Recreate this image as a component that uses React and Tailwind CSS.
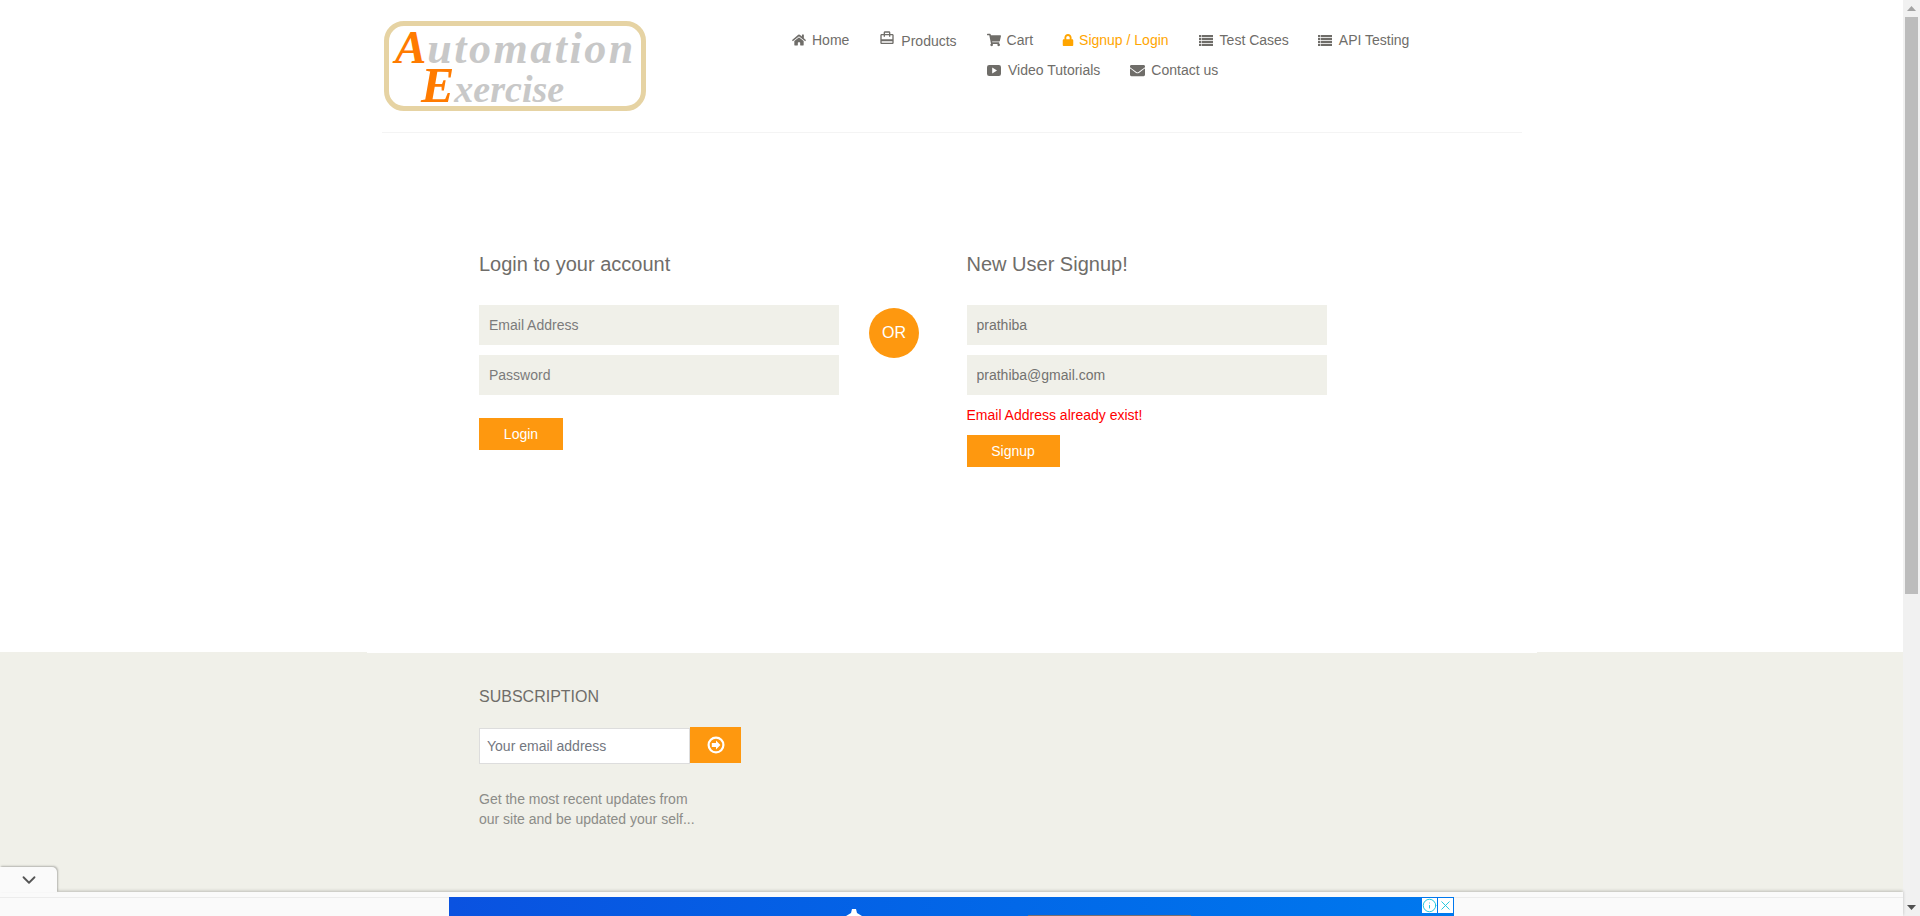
import React from "react";
import { FaHome, FaShoppingCart, FaLock, FaEnvelope } from "react-icons/fa";
import { MdCardTravel } from "react-icons/md";
import { ChevronDown, Info, X } from "lucide-react";

function Logo() {
  return (
    <div className="ml-[2.5px] mt-[21px] w-[262px] h-[90px] border-[5px] border-[#e6d3a3] rounded-[20px] bg-white pt-[2px] font-['Liberation_Serif',serif] italic font-bold whitespace-nowrap">
      <div className="h-[38px] flex items-baseline pl-[6px]">
        <span className="text-[47px] leading-[38px] text-[#ff7b00]">A</span>
        <span className="text-[44px] leading-[38px] text-[#c8c8c8] tracking-[2.5px] ml-[1px]">utomation</span>
      </div>
      <div className="h-[38px] flex items-baseline pl-[32px]">
        <span className="text-[50px] leading-[38px] text-[#ff7b00]">E</span>
        <span className="text-[38px] leading-[38px] text-[#c8c8c8]">xercise</span>
      </div>
    </div>
  );
}

function ListIcon() {
  return (
    <svg width="14" height="11" viewBox="0 0 14 11" className="shrink-0" fill="currentColor">
      <rect x="0" y="0" width="2.4" height="2.2" />
      <rect x="3" y="0" width="11" height="2.2" />
      <rect x="0" y="3" width="2.4" height="2.2" />
      <rect x="3" y="3" width="11" height="2.2" />
      <rect x="0" y="6" width="2.4" height="2.2" />
      <rect x="3" y="6" width="11" height="2.2" />
      <rect x="0" y="9" width="2.4" height="2" />
      <rect x="3" y="9" width="11" height="2" />
    </svg>
  );
}

function PlayIcon() {
  return (
    <svg width="14" height="11" viewBox="0 0 14 11" className="shrink-0">
      <rect width="14" height="11" rx="2.2" fill="currentColor" />
      <path d="M5.2 2.6L10 5.5L5.2 8.4z" fill="#ffffff" />
    </svg>
  );
}

function CircleArrow() {
  return (
    <svg width="18" height="18" viewBox="0 0 18 18">
      <circle cx="9" cy="9" r="7.4" fill="none" stroke="#ffffff" strokeWidth="2.2" />
      <path d="M9 4.6L13.4 9L9 13.4V11H4.8V7H9z" fill="#ffffff" />
    </svg>
  );
}

function NavItem({ icon, label, gap, textClass = "", color = "text-[#6f6d69]", ml = "" }) {
  return (
    <a className={`flex items-center h-[30px] text-[14px] ${color} ${ml}`} style={{ gap }}>
      {icon}
      <span className={textClass}>{label}</span>
    </a>
  );
}

function Field({ placeholder, value }) {
  return (
    <input
      readOnly
      placeholder={placeholder}
      defaultValue={value}
      className="block w-[360px] h-[40px] bg-[#f0f0e9] pl-[10px] text-[14px] text-[#737270] placeholder:text-[#7b7b7b] outline-none"
    />
  );
}

function Scrollbar() {
  return (
    <aside className="w-[17px] shrink-0 bg-[#f1f1f1] flex flex-col">
      <div className="h-[17px] flex items-center justify-center">
        <svg width="9" height="5" viewBox="0 0 9 5"><path d="M4.5 0L9 5H0z" fill="#a3a3a3" /></svg>
      </div>
      <div className="h-[577px] mx-[2px] bg-[#bcbcbc]" />
      <div className="flex-1" />
      <div className="h-[17px] flex items-center justify-center">
        <svg width="9" height="5" viewBox="0 0 9 5"><path d="M0 0H9L4.5 5z" fill="#505050" /></svg>
      </div>
    </aside>
  );
}

function AdBar() {
  return (
    <div className="absolute left-0 bottom-0 w-[1903px] h-[24px] bg-[#fafafa] shadow-[0_-1px_3px_rgba(0,0,0,0.22)]">
      <div className="absolute left-0 bottom-[24px] w-[57px] h-[25px] bg-[#fafafa] rounded-tr-[5px] shadow-[1px_-1px_2px_rgba(0,0,0,0.25)] flex items-center justify-center text-[#555]">
        <ChevronDown size={22} strokeWidth={2} />
      </div>
      <div className="mt-[5px] h-[19px] border-t border-[#ececec]">
        <div className="relative ml-[449px] -mt-px w-[1005px] h-[19px] bg-linear-to-r from-[#0a52e0] to-[#0078ee] overflow-hidden">
          <svg className="absolute inset-0" width="1005" height="19" viewBox="0 0 1005 19">
            <path d="M397 19L402 16L403 12H407L408 16L413 19z" fill="#ffffff" />
            <rect x="579" y="18" width="163" height="1" fill="#7a6f70" />
          </svg>
          <div className="absolute left-[973px] top-[1px] w-[15px] h-[15px] bg-white flex items-center justify-center text-[#19c5dc]">
            <Info size={15} strokeWidth={1.5} />
          </div>
          <div className="absolute left-[989px] top-[1px] w-[15px] h-[15px] bg-white flex items-center justify-center text-[#19c5dc]">
            <X size={15} strokeWidth={1.5} />
          </div>
        </div>
      </div>
    </div>
  );
}

export default function App() {
  return (
    <div className="relative flex w-full h-[916px] overflow-hidden bg-white font-['Liberation_Sans',Arial,sans-serif]">
      <div className="flex-1 min-w-0 flex flex-col">
        <header className="w-[1170px] mx-auto px-[15px] shrink-0">
          <div className="h-[133px] flex border-b border-[#f4f4f4]">
            <div className="w-[410.5px] shrink-0">
              <Logo />
            </div>
            <nav className="pt-[25px] flex flex-col">
              <div className="flex gap-x-[29px]">
                <NavItem gap={6} label="Home" icon={<FaHome size={14} className="shrink-0" />} />
                <NavItem gap={6} label="Products" textClass="relative top-px" ml="ml-[1px]" icon={<MdCardTravel size={16} className="shrink-0 relative -top-[2px]" />} />
                <NavItem gap={6} label="Cart" ml="ml-[1px]" icon={<FaShoppingCart size={14} className="shrink-0" />} />
                <NavItem gap={5} label="Signup / Login" color="text-[#ffa500]" icon={<FaLock size={12} className="shrink-0" />} />
                <NavItem gap={7} label="Test Cases" ml="ml-[1px]" icon={<ListIcon />} />
                <NavItem gap={7} label="API Testing" icon={<ListIcon />} />
              </div>
              <div className="flex gap-x-[30px] ml-[195px]">
                <NavItem gap={7} label="Video Tutorials" icon={<PlayIcon />} />
                <NavItem gap={6} label="Contact us" icon={<FaEnvelope size={15} className="shrink-0" />} />
              </div>
            </nav>
          </div>
        </header>

        <main className="w-[1170px] mx-auto h-[519px] shrink-0 pt-[120px] pl-[112.5px] flex items-start">
          <section className="w-[360px]">
            <h2 className="text-[20px] leading-[22px] text-[#6f6d69] mb-[30px]">Login to your account</h2>
            <div className="flex flex-col gap-[10px]">
              <Field placeholder="Email Address" />
              <Field placeholder="Password" />
            </div>
            <button className="mt-[23px] block w-[84px] h-[32px] bg-[#fe980f] text-white text-[14px] font-normal">Login</button>
          </section>
          <div className="ml-[30px] mr-[47.5px] mt-[55px] w-[50px] h-[50px] rounded-full bg-[#fe980f] text-white text-[16px] flex items-center justify-center shrink-0">OR</div>
          <section className="w-[360px]">
            <h2 className="text-[20px] leading-[22px] text-[#6f6d69] mb-[30px]">New User Signup!</h2>
            <div className="flex flex-col gap-[10px]">
              <Field value="prathiba" />
              <Field value="prathiba@gmail.com" />
            </div>
            <p className="mt-[10px] text-[14px] leading-[20px] text-[#ff0000]">Email Address already exist!</p>
            <button className="mt-[10px] block w-[93px] h-[32px] bg-[#fe980f] text-white text-[14px] font-normal">Signup</button>
          </section>
        </main>

        <footer className="flex-1 bg-[#f0f0e9]">
          <div className="w-[1170px] mx-auto border-t border-white pt-[34px] pl-[112.5px]">
            <h2 className="text-[16px] leading-[20px] text-[#6f6d69]">SUBSCRIPTION</h2>
            <div className="mt-[20px] flex items-start">
              <input
                readOnly
                placeholder="Your email address"
                className="mt-px w-[211px] h-[36px] bg-white border border-[#dddddd] pl-[7px] text-[14px] placeholder:text-[#73777f] outline-none"
              />
              <button className="w-[51px] h-[36px] bg-[#fe980f] text-white flex items-center justify-center">
                <CircleArrow />
              </button>
            </div>
            <p className="mt-[25px] text-[14px] leading-[20px] text-[#8c8c88]">
              Get the most recent updates from<br />our site and be updated your self...
            </p>
          </div>
        </footer>
      </div>
      <Scrollbar />
      <AdBar />
    </div>
  );
}
